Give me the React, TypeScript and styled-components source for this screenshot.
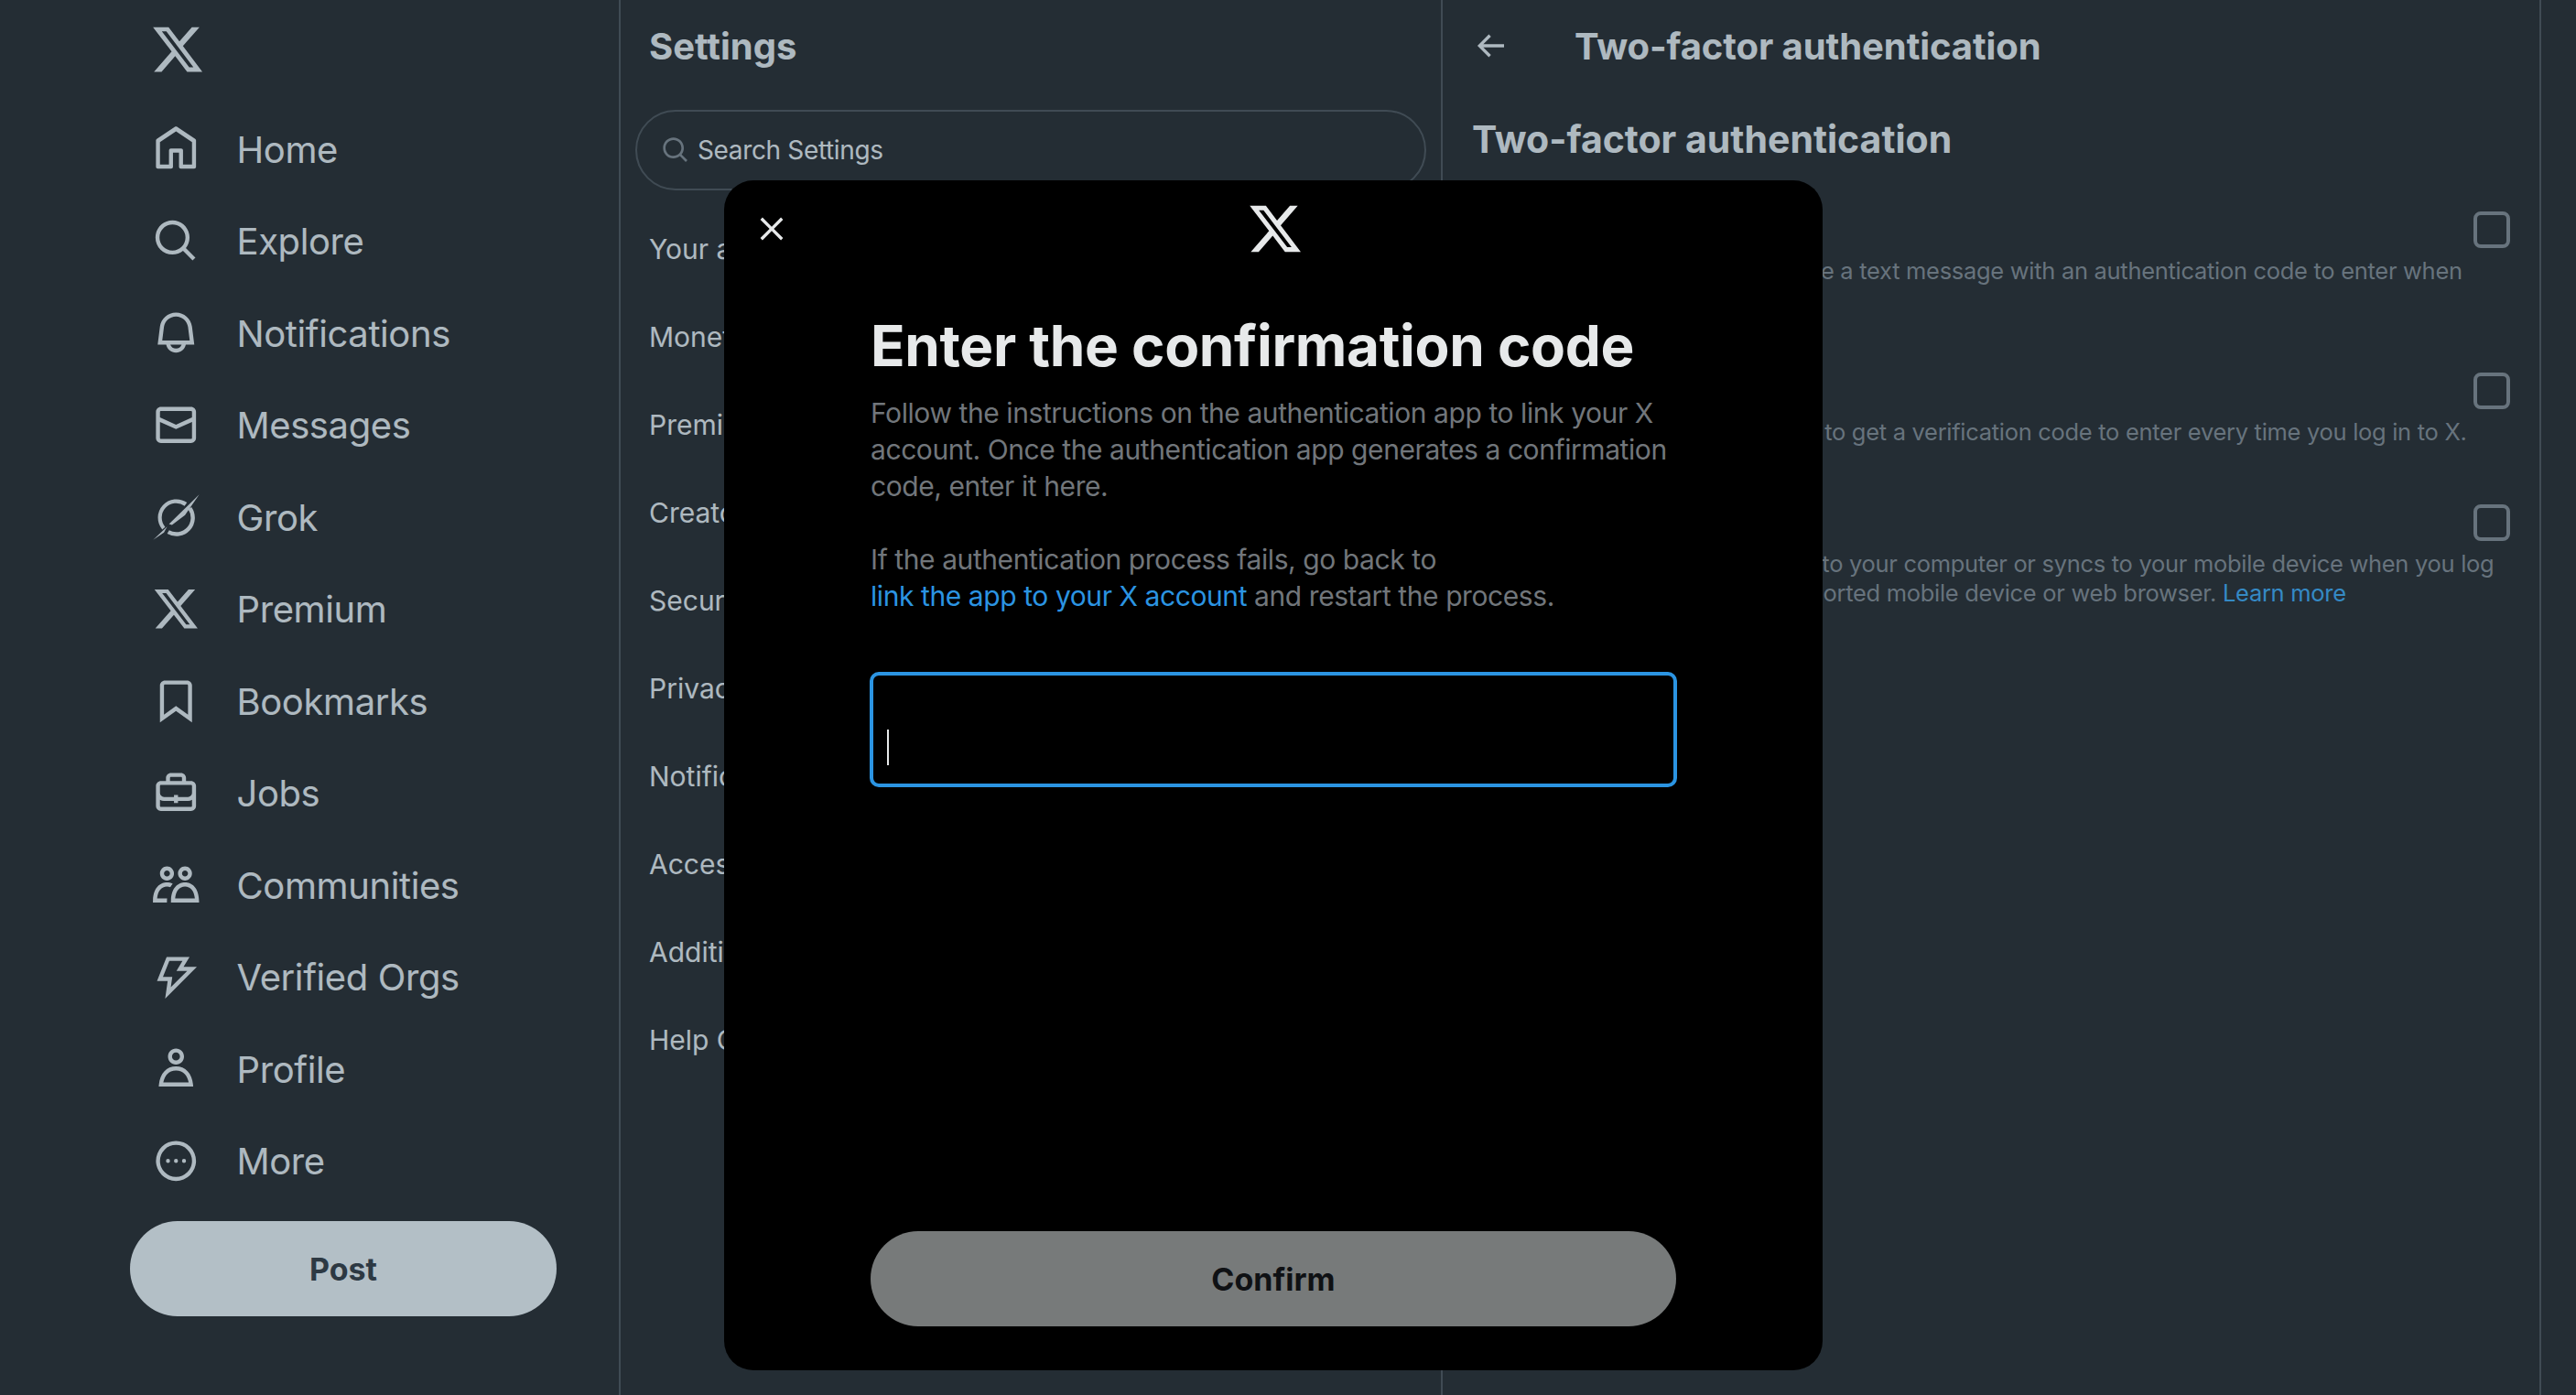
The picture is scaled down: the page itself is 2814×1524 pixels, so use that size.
import React from 'react';
import styled, { createGlobalStyle } from 'styled-components';

const GlobalStyle = createGlobalStyle`
  html, body {
    margin: 0;
    padding: 0;
    background: #000;
    overflow: hidden;
  }
  * {
    box-sizing: border-box;
  }
  body {
    font-family: Inter, "Liberation Sans", sans-serif;
    color: #e7e9ea;
  }
`;

const Page = styled.div`
  position: relative;
  display: grid;
  grid-template-columns: 676px 898px 1202px;
  width: 2814px;
  height: 1524px;
  overflow: hidden;
`;

const Sidebar = styled.nav`
  display: flex;
  flex-direction: column;
  padding-left: 142px;
`;

const LogoRow = styled.div`
  display: flex;
  align-items: center;
  height: 112px;
  padding: 0 0 4px 22px;
`;

const NavItem = styled.div`
  display: flex;
  align-items: center;
  gap: 40px;
  height: 100.5px;
  padding-left: 24px;
  font-size: 40px;
  letter-spacing: -0.4px;
`;

const NavLabel = styled.span`
  padding-top: 2px;
`;

const PostButton = styled.button`
  width: 466px;
  height: 104px;
  margin-top: 16px;
  border: 0;
  border-radius: 52px;
  background: #eff3f4;
  color: #0f1419;
  font-family: inherit;
  font-size: 34px;
  font-weight: 700;
`;

const SettingsColumn = styled.section`
  border-left: 2px solid #2f3336;
`;

const ColumnTitle = styled.h2`
  display: flex;
  align-items: center;
  height: 100px;
  margin: 0;
  padding-left: 31px;
  font-size: 40px;
  font-weight: 700;
`;

const SearchBox = styled.div`
  display: flex;
  align-items: center;
  gap: 8px;
  width: 864px;
  height: 88px;
  margin: 20px 0 0 16px;
  padding-left: 26px;
  border: 2px solid #2f3336;
  border-radius: 44px;
  font-size: 28px;
  letter-spacing: -0.35px;
`;

const SearchGlyph = styled.span`
  display: flex;
  color: #71767b;
`;

const SettingsList = styled.div`
  display: flex;
  flex-direction: column;
  margin-top: 16px;
`;

const SettingsRow = styled.div`
  display: flex;
  align-items: center;
  height: 96px;
  padding-left: 31px;
  font-size: 30px;
  white-space: nowrap;
`;

const DetailColumn = styled.section`
  border-left: 2px solid #2f3336;
  border-right: 2px solid #2f3336;
`;

const DetailHeader = styled.header`
  display: flex;
  align-items: center;
  gap: 72px;
  height: 100px;
  padding-left: 32px;
`;

const DetailTitle = styled.h2`
  margin: 0;
  font-size: 40px;
  font-weight: 700;
  letter-spacing: -0.07px;
`;

const SectionHeading = styled.h3`
  margin: 28px 0 46px 32px;
  font-size: 41px;
  line-height: 48px;
  font-weight: 700;
`;

const Option = styled.div`
  padding: 0 32px 54px 32px;
`;

const OptionHead = styled.div`
  display: flex;
  align-items: center;
  justify-content: space-between;
  height: 58px;
  font-size: 30px;
`;

const CheckBox = styled.span`
  width: 40px;
  height: 40px;
  border: 4px solid #71767b;
  border-radius: 8px;
`;

const OptionText = styled.p`
  margin: 0;
  padding-right: 12px;
  font-size: 25.5px;
  line-height: 32px;
  letter-spacing: -0.3px;
  color: #71767b;
`;

const Overlay = styled.div`
  position: absolute;
  inset: 0;
  display: flex;
  justify-content: center;
  align-items: flex-start;
  padding: 197px 32px 0 0;
  background: rgba(91, 112, 131, 0.4);
`;

const Modal = styled.div`
  display: flex;
  flex-direction: column;
  width: 1200px;
  height: 1300px;
  padding-bottom: 48px;
  border-radius: 32px;
  background: #000;
`;

const ModalHeader = styled.div`
  display: grid;
  grid-template-columns: 104px 1fr 100px;
  align-items: center;
  justify-items: center;
  height: 106px;
`;

const ModalBody = styled.div`
  flex: 1;
  display: flex;
  flex-direction: column;
  padding: 0 160px;
`;

const ModalTitle = styled.h1`
  margin: 39px 0 17px;
  font-size: 62px;
  line-height: 72px;
  font-weight: 700;
  letter-spacing: -0.33px;
  color: #e7e9ea;
`;

const ModalText = styled.p`
  margin: 0 0 40px;
  font-size: 30px;
  line-height: 40px;
  letter-spacing: -0.42px;
  color: #71767b;
`;

const DialogLink = styled.span`
  color: #2b94e2;
`;

const PageLink = styled.span`
  color: #1d9bf0;
`;

const CodeInput = styled.div`
  display: flex;
  height: 126px;
  margin: 23px -1px 0;
  padding: 59px 0 0 15px;
  border: 4px solid #2b94e2;
  border-radius: 10px;
`;

const Caret = styled.span`
  width: 2px;
  height: 39px;
  background: #e7e9ea;
`;

const ConfirmButton = styled.button`
  width: 880px;
  height: 104px;
  margin-top: auto;
  border: 0;
  border-radius: 52px;
  background: #777a7a;
  color: #0f1114;
  font-family: inherit;
  font-size: 34px;
  font-weight: 700;
`;

const paths = {
  x: 'M18.244 2.25h3.308l-7.227 8.26 8.502 11.24H16.17l-5.214-6.817L4.99 21.75H1.68l7.73-8.835L1.254 2.25H8.08l4.713 6.231zm-1.161 17.52h1.833L7.084 4.126H5.117z',
  home: 'M21.591 7.146L12.52 1.157c-.316-.21-.724-.21-1.04 0l-9.071 5.99c-.26.173-.409.456-.409.757v13.183c0 .502.418.913.929.913h6.638c.511 0 .929-.41.929-.913v-7.075h3.008v7.075c0 .502.418.913.929.913h6.639c.51 0 .928-.41.928-.913V7.904c0-.301-.158-.584-.408-.758zM20 20l-4.5.01.011-7.097c0-.502-.418-.913-.928-.913H9.44c-.511 0-.929.41-.929.913L8.5 20H4V8.773l8.011-5.342L20 8.764z',
  search: 'M10.25 3.75c-3.59 0-6.5 2.91-6.5 6.5s2.91 6.5 6.5 6.5c1.795 0 3.419-.726 4.596-1.904 1.178-1.177 1.904-2.801 1.904-4.596 0-3.59-2.91-6.5-6.5-6.5zm-8.5 6.5c0-4.694 3.806-8.5 8.5-8.5s8.5 3.806 8.5 8.5c0 1.986-.682 3.815-1.824 5.262l4.781 4.781-1.414 1.414-4.781-4.781c-1.447 1.142-3.276 1.824-5.262 1.824-4.694 0-8.5-3.806-8.5-8.5z',
  bell: 'M19.993 9.042C19.48 5.017 16.054 2 11.996 2s-7.49 3.021-7.999 7.051L2.866 18H7.1c.463 2.282 2.481 4 4.9 4s4.437-1.718 4.9-4h4.236l-1.143-8.958zM12 20c-1.306 0-2.417-.835-2.829-2h5.658c-.412 1.165-1.523 2-2.829 2zm-6.866-4l.847-6.698C6.364 6.272 8.941 4 11.996 4s5.627 2.268 6.013 5.295L18.864 16H5.134z',
  mail: 'M1.998 5.5c0-1.381 1.119-2.5 2.5-2.5h15c1.381 0 2.5 1.119 2.5 2.5v13c0 1.381-1.119 2.5-2.5 2.5h-15c-1.381 0-2.5-1.119-2.5-2.5v-13zm2.5-.5c-.276 0-.5.224-.5.5v2.764l8 3.638 8-3.636V5.5c0-.276-.224-.5-.5-.5h-15zm15.5 5.463l-8 3.636-8-3.638V18.5c0 .276.224.5.5.5h15c.276 0 .5-.224.5-.5v-8.037z',
  bookmark: 'M4 4.5C4 3.12 5.12 2 6.5 2h11C18.88 2 20 3.12 20 4.5v18.44l-8-5.71-8 5.71V4.5zM6.5 4c-.276 0-.5.22-.5.5v14.56l6-4.29 6 4.29V4.5c0-.28-.224-.5-.5-.5h-11z',
  jobs: 'M19.5 6H17V4.5C17 3.12 15.88 2 14.5 2h-5C8.12 2 7 3.12 7 4.5V6H4.5C3.12 6 2 7.12 2 8.5v10C2 19.88 3.12 21 4.5 21h15c1.38 0 2.5-1.12 2.5-2.5v-10C22 7.12 20.88 6 19.5 6zM9 4.5c0-.28.23-.5.5-.5h5c.28 0 .5.22.5.5V6H9V4.5zm11 14c0 .28-.22.5-.5.5h-15c-.27 0-.5-.22-.5-.5v-3.04c.59.35 1.27.54 2 .54h5v1h2v-1h5c.73 0 1.41-.19 2-.54v3.04zm0-6.49c0 1.1-.9 1.99-2 1.99h-5v-1h-2v1H6c-1.1 0-2-.9-2-2V8.5c0-.28.23-.5.5-.5h15c.28 0 .5.22.5.5v3.51z',
  communities: 'M7.501 19.917L7.471 21H.472l.029-1.027c.184-6.618 3.736-8.977 7-8.977.963 0 1.95.212 2.87.672-.444.478-.851 1.03-1.212 1.656-.507-.204-1.054-.329-1.658-.329-2.767 0-4.57 2.223-4.938 6.004H7.56c-.023.302-.05.599-.059.917zm15.998.056L23.528 21H9.472l.029-1.027c.184-6.618 3.736-8.977 7-8.977s6.816 2.358 7 8.977zM21.437 19c-.367-3.781-2.17-6.004-4.938-6.004s-4.57 2.223-4.938 6.004h9.875zm-4.938-9c-.799 0-1.527-.279-2.116-.73-.836-.64-1.384-1.638-1.384-2.77 0-1.93 1.567-3.5 3.5-3.5s3.5 1.57 3.5 3.5c0 1.132-.548 2.13-1.384 2.77-.589.451-1.317.73-2.116.73zm-1.5-3.5c0 .827.673 1.5 1.5 1.5s1.5-.673 1.5-1.5-.673-1.5-1.5-1.5-1.5.673-1.5 1.5zM7.5 3C9.433 3 11 4.57 11 6.5S9.433 10 7.5 10 4 8.43 4 6.5 5.567 3 7.5 3zm0 2C6.673 5 6 5.673 6 6.5S6.673 8 7.5 8 9 7.327 9 6.5 8.327 5 7.5 5z',
  bolt: 'M7.323 2h11.443l-3 5h6.648L6.586 22.83 7.847 14H2.523l4.8-12zm1.354 2l-3.2 8h4.676l-.739 5.17L17.586 9h-5.352l3-5H8.677z',
  profile: 'M5.651 19h12.698c-.337-1.8-1.023-3.21-1.945-4.19C15.318 13.65 13.838 13 12 13s-3.317.65-4.404 1.81c-.922.98-1.608 2.39-1.945 4.19zm.486-5.56C7.627 11.85 9.648 11 12 11s4.373.85 5.863 2.44c1.477 1.58 2.366 3.8 2.632 6.46l.11 1.1H3.395l.11-1.1c.266-2.66 1.155-4.88 2.632-6.46zM12 4c-1.105 0-2 .9-2 2s.895 2 2 2 2-.9 2-2-.895-2-2-2zM8 6c0-2.21 1.791-4 4-4s4 1.79 4 4-1.791 4-4 4-4-1.79-4-4z',
  more: 'M2 12a10 10 0 1 1 20 0 10 10 0 0 1-20 0zm10-8a8 8 0 1 0 0 16 8 8 0 0 0 0-16zm-3 8a1 1 0 1 1-2 0 1 1 0 0 1 2 0zm4 0a1 1 0 1 1-2 0 1 1 0 0 1 2 0zm4 0a1 1 0 1 1-2 0 1 1 0 0 1 2 0z',
  grok: 'M17.48 5.06A9.2 9.2 0 0 0 5.15 18.51L6.6 17.2A7.2 7.2 0 0 1 16.3 6.7ZM19.74 7.32A9.2 9.2 0 0 1 7.6 20.57L8.6 18.85A7.2 7.2 0 0 0 18.1 8.5ZM8.5 15.8L23.6 1 16.5 11.3 10 16.2ZM.6 23.6L7.6 17 6 20Z',
  back: 'M7.414 13l5.043 5.04-1.414 1.42L3.586 12l7.457-7.46 1.414 1.42L7.414 11H21v2H7.414z',
  close: 'M10.59 12L4.54 5.96l1.42-1.42L12 10.59l6.04-6.05 1.42 1.42L13.41 12l6.05 6.04-1.42 1.42L12 13.41l-6.04 6.05-1.42-1.42L10.59 12z',
};

type IconName = keyof typeof paths;

function Icon({ name, size = 52.5 }: { name: IconName; size?: number }) {
  return (
    <svg width={size} height={size} viewBox="0 0 24 24" fill="currentColor" style={{ flexShrink: 0 }}>
      <path d={paths[name]} />
    </svg>
  );
}

const navItems: { icon: IconName; label: string }[] = [
  { icon: 'home', label: 'Home' },
  { icon: 'search', label: 'Explore' },
  { icon: 'bell', label: 'Notifications' },
  { icon: 'mail', label: 'Messages' },
  { icon: 'grok', label: 'Grok' },
  { icon: 'x', label: 'Premium' },
  { icon: 'bookmark', label: 'Bookmarks' },
  { icon: 'jobs', label: 'Jobs' },
  { icon: 'communities', label: 'Communities' },
  { icon: 'bolt', label: 'Verified Orgs' },
  { icon: 'profile', label: 'Profile' },
  { icon: 'more', label: 'More' },
];

const settingsItems = [
  'Your account',
  'Monetization',
  'Premium',
  'Creator Subscriptions',
  'Security and account access',
  'Privacy and safety',
  'Notifications',
  'Accessibility, display, and languages',
  'Additional resources',
  'Help Center',
];

function App() {
  return (
    <Page>
      <GlobalStyle />
      <Sidebar>
        <LogoRow>
          <Icon name="x" size={60} />
        </LogoRow>
        {navItems.map((item) => (
          <NavItem key={item.label}>
            <Icon name={item.icon} />
            <NavLabel>{item.label}</NavLabel>
          </NavItem>
        ))}
        <PostButton>Post</PostButton>
      </Sidebar>

      <SettingsColumn>
        <ColumnTitle>Settings</ColumnTitle>
        <SearchBox>
          <SearchGlyph>
            <Icon name="search" size={32} />
          </SearchGlyph>
          Search Settings
        </SearchBox>
        <SettingsList>
          {settingsItems.map((label) => (
            <SettingsRow key={label}>{label}</SettingsRow>
          ))}
        </SettingsList>
      </SettingsColumn>

      <DetailColumn>
        <DetailHeader>
          <Icon name="back" size={40} />
          <DetailTitle>Two-factor authentication</DetailTitle>
        </DetailHeader>
        <SectionHeading>Two-factor authentication</SectionHeading>
        <Option>
          <OptionHead>
            Text message
            <CheckBox />
          </OptionHead>
          <OptionText>
            Use your mobile phone to receive a text message with an authentication code to enter when
            you log in to X.
          </OptionText>
        </Option>
        <Option>
          <OptionHead>
            Authentication app
            <CheckBox />
          </OptionHead>
          <OptionText>
            Use a mobile authentication app to get a verification code to enter every time you log in to X.
          </OptionText>
        </Option>
        <Option>
          <OptionHead>
            Security key
            <CheckBox />
          </OptionHead>
          <OptionText>
            Use a security key that inserts into your computer or syncs to your mobile device when you log
            in to X. You'll need to use a supported mobile device or web browser. <PageLink>Learn more</PageLink>
          </OptionText>
        </Option>
      </DetailColumn>

      <Overlay>
        <Modal>
          <ModalHeader>
            <Icon name="close" size={40} />
            <Icon name="x" size={62} />
          </ModalHeader>
          <ModalBody>
            <ModalTitle>Enter the confirmation code</ModalTitle>
            <ModalText>
              Follow the instructions on the authentication app to link your X account. Once the
              authentication app generates a confirmation code, enter it here.
            </ModalText>
            <ModalText>
              If the authentication process fails, go back to
              <br />
              <DialogLink>link the app to your X account</DialogLink> and restart the process.
            </ModalText>
            <CodeInput>
              <Caret />
            </CodeInput>
            <ConfirmButton>Confirm</ConfirmButton>
          </ModalBody>
        </Modal>
      </Overlay>
    </Page>
  );
}

export default App;
